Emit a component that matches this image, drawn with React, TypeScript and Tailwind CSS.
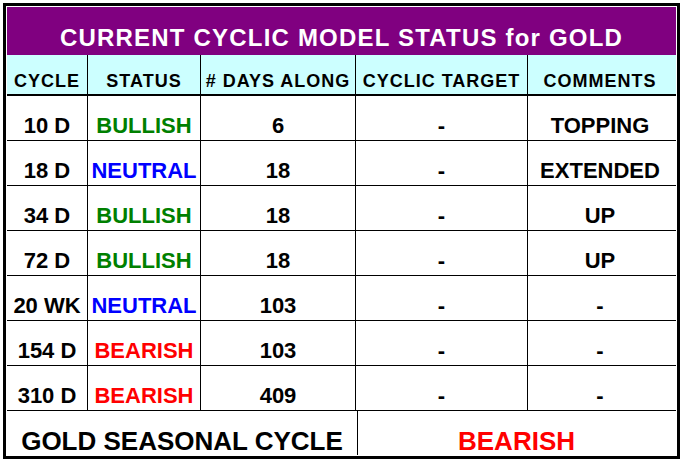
const rows = [
  { cycle: "10 D", status: "BULLISH", days: "6", target: "-", comment: "TOPPING" },
  { cycle: "18 D", status: "NEUTRAL", days: "18", target: "-", comment: "EXTENDED" },
  { cycle: "34 D", status: "BULLISH", days: "18", target: "-", comment: "UP" },
  { cycle: "72 D", status: "BULLISH", days: "18", target: "-", comment: "UP" },
  { cycle: "20 WK", status: "NEUTRAL", days: "103", target: "-", comment: "-" },
  { cycle: "154 D", status: "BEARISH", days: "103", target: "-", comment: "-" },
  { cycle: "310 D", status: "BEARISH", days: "409", target: "-", comment: "-" },
];

const statusColor: Record<string, string> = {
  BULLISH: "text-[#008000]",
  NEUTRAL: "text-[#0000ff]",
  BEARISH: "text-[#ff0000]",
};

const cols = "grid grid-cols-[80px_113px_155px_172px_145px]";
const headers = ["CYCLE", "STATUS", "# DAYS ALONG", "CYCLIC TARGET", "COMMENTS"];

export default function App() {
  return (
    <div className="h-[463px] w-[684px] bg-white pl-[3px] pt-[3px] font-['Liberation_Sans',Arial,sans-serif] font-bold">
      <div className="w-[677px] border-[3px] border-black px-px pt-px pb-px">
        <div className="flex h-[48px] items-end justify-center bg-[#800080] pb-[5px] text-[24px] leading-none tracking-[1.2px] text-white">
          CURRENT CYCLIC MODEL STATUS for GOLD
        </div>

        <div className={`${cols} h-[41px] border-b-2 border-black bg-[#ccffff] text-[18px] leading-none tracking-[1px] text-black`}>
          {headers.map((h, i) => (
            <div
              key={h}
              className={`flex items-end justify-center whitespace-nowrap pb-[4px] ${i > 0 ? "border-l border-black" : ""}`}
            >
              {h}
            </div>
          ))}
        </div>

        {rows.map((r) => (
          <div key={r.cycle} className={`${cols} h-[45px] border-b border-black text-[22px] leading-none text-black`}>
            <div className="flex items-end justify-center whitespace-nowrap pb-[3px]">{r.cycle}</div>
            <div className={`flex items-end justify-center whitespace-nowrap border-l border-black pb-[3px] ${statusColor[r.status]}`}>
              {r.status}
            </div>
            <div className="flex items-end justify-center border-l border-black pb-[3px]">{r.days}</div>
            <div className="flex items-end justify-center border-l border-black pb-[3px]">{r.target}</div>
            <div className="flex items-end justify-center whitespace-nowrap border-l border-black pb-[3px]">{r.comment}</div>
          </div>
        ))}

        <div className="grid h-[44px] grid-cols-[350px_318px] text-[26px] leading-none">
          <div className="flex items-end justify-center whitespace-nowrap pb-[1px] text-black">GOLD SEASONAL CYCLE</div>
          <div className="flex items-end justify-center border-l border-black pb-[1px] text-[#ff0000]">BEARISH</div>
        </div>
      </div>
    </div>
  );
}
